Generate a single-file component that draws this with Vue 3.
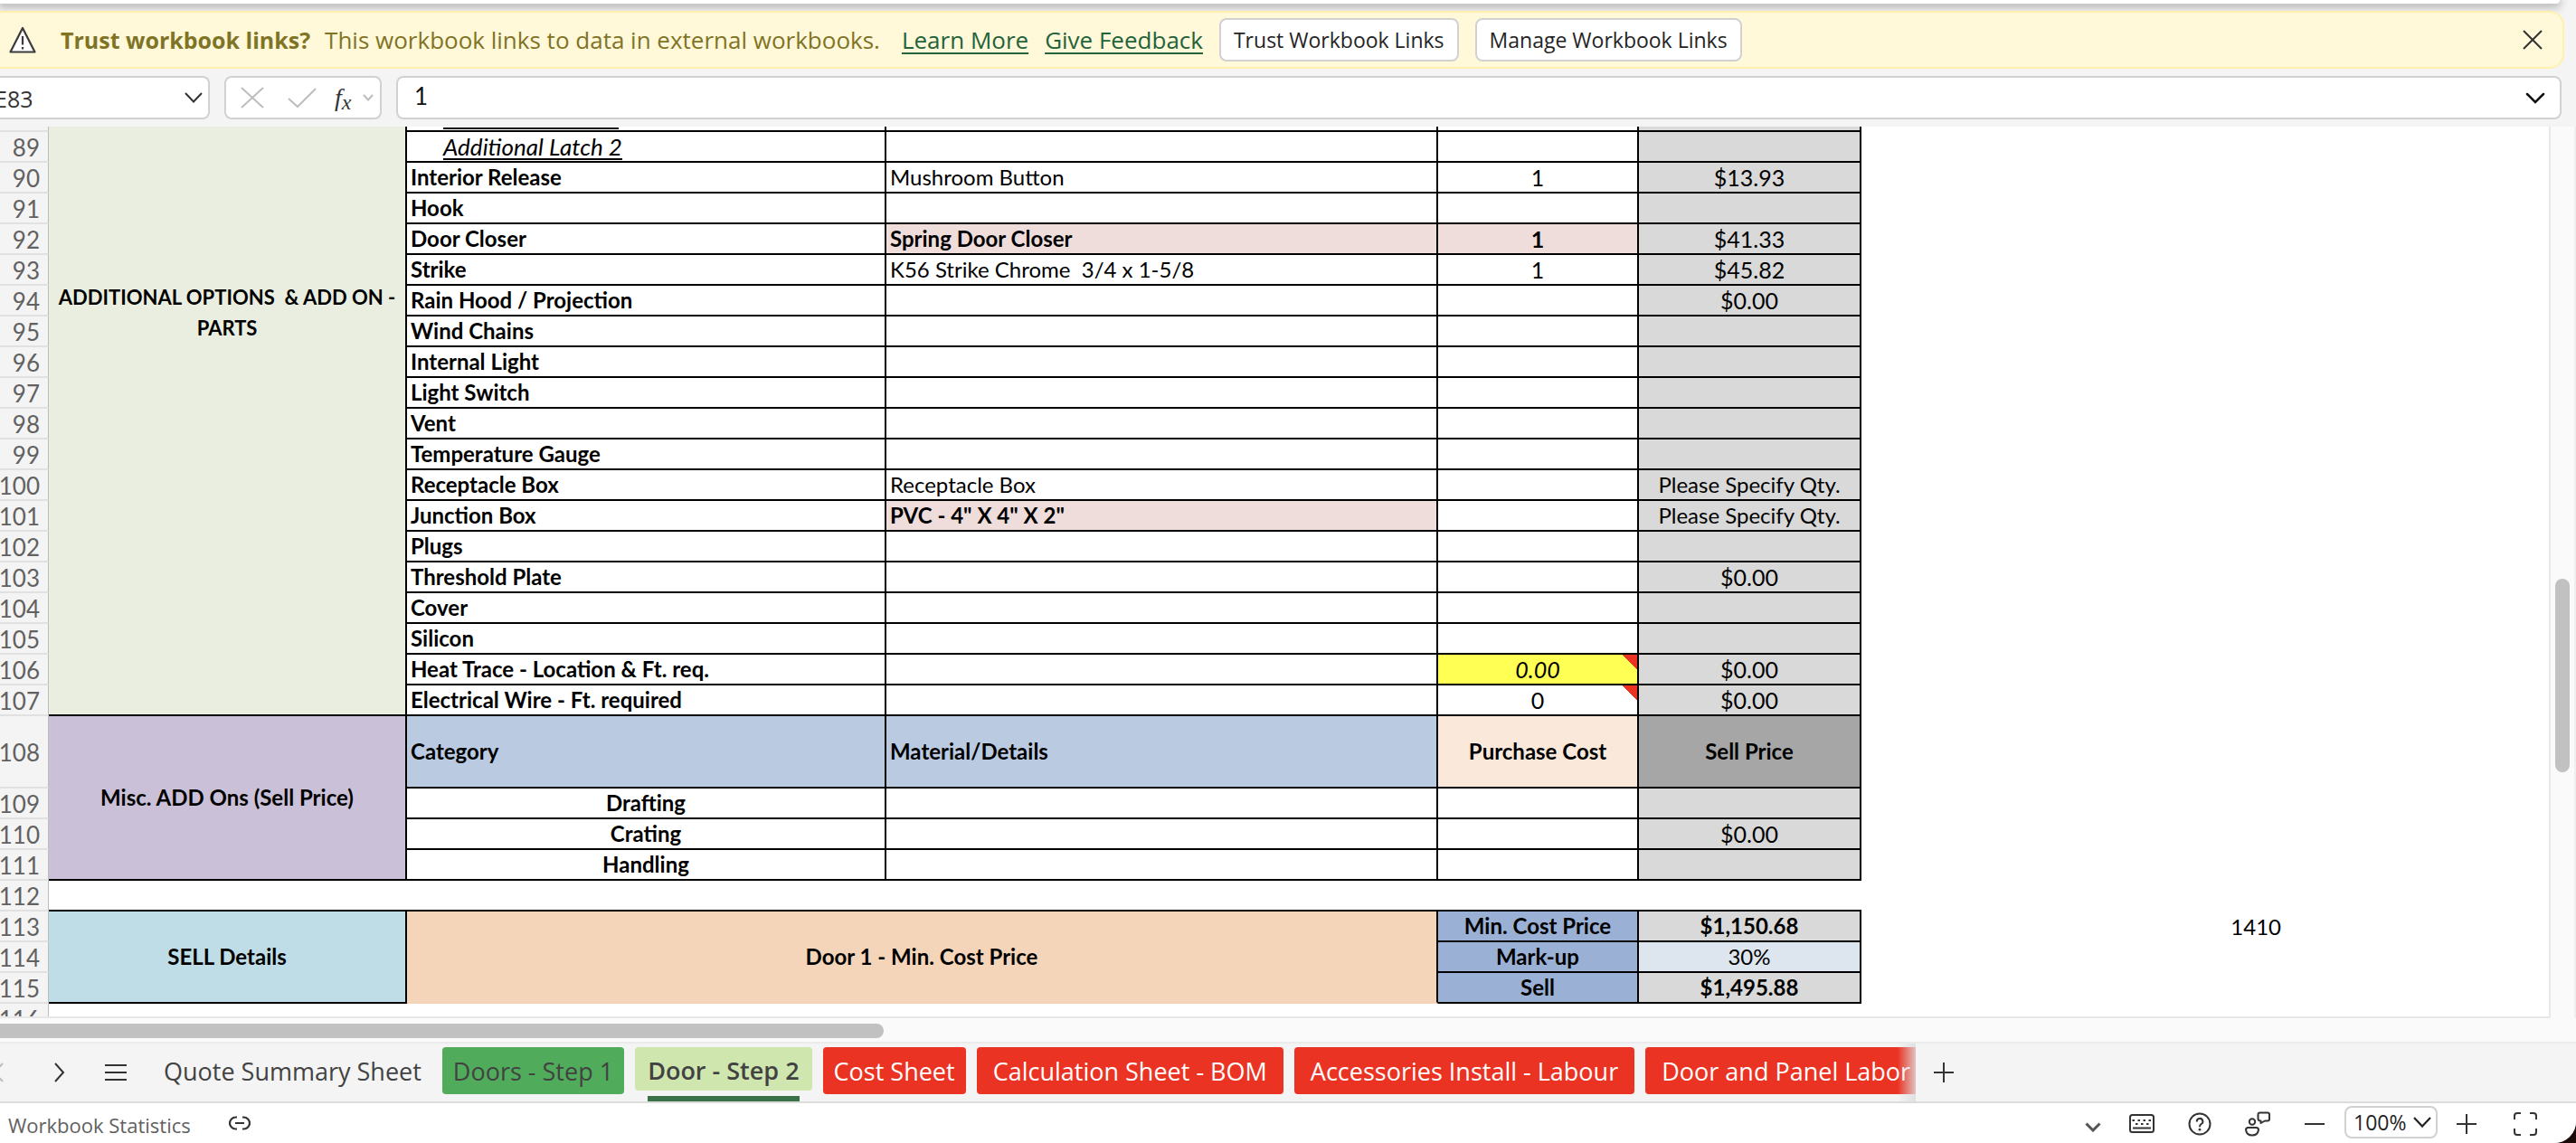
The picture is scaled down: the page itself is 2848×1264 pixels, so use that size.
<script setup>
const items = [
  { n: 89, label: 'Additional Latch 2', latch: true },
  { n: 90, label: 'Interior Release', detail: 'Mushroom Button', qty: '1', price: '$13.93' },
  { n: 91, label: 'Hook' },
  { n: 92, label: 'Door Closer', detail: 'Spring Door Closer', qty: '1', price: '$41.33', detailClass: 'pink bold', qtyClass: 'pink bold' },
  { n: 93, label: 'Strike', detail: 'K56 Strike Chrome  3/4 x 1-5/8', qty: '1', price: '$45.82' },
  { n: 94, label: 'Rain Hood / Projection', price: '$0.00' },
  { n: 95, label: 'Wind Chains' },
  { n: 96, label: 'Internal Light' },
  { n: 97, label: 'Light Switch' },
  { n: 98, label: 'Vent' },
  { n: 99, label: 'Temperature Gauge' },
  { n: 100, label: 'Receptacle Box', detail: 'Receptacle Box', price: 'Please Specify Qty.' },
  { n: 101, label: 'Junction Box', detail: 'PVC - 4" X 4" X 2"', price: 'Please Specify Qty.', detailClass: 'pink bold' },
  { n: 102, label: 'Plugs' },
  { n: 103, label: 'Threshold Plate', price: '$0.00' },
  { n: 104, label: 'Cover' },
  { n: 105, label: 'Silicon' },
  { n: 106, label: 'Heat Trace - Location & Ft. req.', qty: '0.00', price: '$0.00', qtyClass: 'yellow italic', note: true },
  { n: 107, label: 'Electrical Wire - Ft. required', qty: '0', price: '$0.00', note: true },
]

const misc = [
  { n: 109, label: 'Drafting' },
  { n: 110, label: 'Crating', price: '$0.00' },
  { n: 111, label: 'Handling' },
]

const tabs = [
  { name: 'Quote Summary Sheet', kind: 'plain' },
  { name: 'Doors - Step 1', kind: 'green' },
  { name: 'Door - Step 2', kind: 'active' },
  { name: 'Cost Sheet', kind: 'red' },
  { name: 'Calculation Sheet - BOM', kind: 'red wide' },
  { name: 'Accessories Install - Labour', kind: 'red wide' },
  { name: 'Door and Panel Labor BOM', kind: 'red wide' },
]
</script>

<template>
  <div class="app">
    <div class="ribbon-edge"></div>

    <section class="banner">
      <svg class="warn" viewBox="0 0 30 30" width="30" height="30">
        <path d="M15 2 L28.500 28.500 H1.500 Z" fill="#fff" stroke="#3b3b3b" stroke-width="2.200" stroke-linejoin="round" />
        <path d="M15 11 V20.500 M15 23 V25.500" stroke="#3b3b3b" stroke-width="2.200" />
      </svg>
      <strong class="banner-title">Trust workbook links?</strong>
      <span class="banner-text">This workbook links to data in external workbooks.</span>
      <a class="link learn" href="#">Learn More</a>
      <a class="link" href="#">Give Feedback</a>
      <button class="banner-btn" type="button">Trust Workbook Links</button>
      <button class="banner-btn" type="button">Manage Workbook Links</button>
      <button class="icon-btn dismiss" type="button" aria-label="Close">
        <svg viewBox="0 0 22 22" width="22" height="22"><path d="M1 1 L21 21 M21 1 L1 21" fill="none" stroke="#333" stroke-width="2" /></svg>
      </button>
    </section>

    <section class="formula-row">
      <div class="name-box">
        <input class="name-input" type="text" value="E83" aria-label="Name box" />
        <svg viewBox="0 0 20 12" width="20" height="12"><path d="M1 1 L10 10.500 L19 1" fill="none" stroke="#333" stroke-width="2" /></svg>
      </div>
      <div class="fx-box">
        <svg viewBox="0 0 26 24" width="26" height="24"><path d="M1 1 L25 23 M25 1 L1 23" fill="none" stroke="#bdbdbd" stroke-width="2" /></svg>
        <svg class="check" viewBox="0 0 32 24" width="32" height="24"><path d="M1 13 L11 22 L31 2" fill="none" stroke="#bdbdbd" stroke-width="2" /></svg>
        <span class="fx">f<sub>x</sub></span>
        <svg class="fx-chev" viewBox="0 0 12 8" width="12" height="8"><path d="M1 1 L6 6.500 L11 1" fill="none" stroke="#bdbdbd" stroke-width="2" /></svg>
      </div>
      <div class="formula-box">
        <input class="formula-input" type="text" value="1" aria-label="Formula bar" />
        <svg viewBox="0 0 22 13" width="22" height="13"><path d="M2 2 L11 11 L20 2" fill="none" stroke="#111" stroke-width="2.500" stroke-linecap="round" /></svg>
      </div>
    </section>

    <div class="grid-area">
      <div class="sheet">
        <table>
          <colgroup>
            <col class="c-num" /><col class="c-group" /><col class="c-label" /><col class="c-detail" />
            <col class="c-qty" /><col class="c-price" /><col class="c-extra" /><col />
          </colgroup>
          <tbody>
            <tr class="sliver">
              <th></th>
              <td class="group olive" rowspan="20">ADDITIONAL OPTIONS&nbsp; &amp; ADD ON -<br />PARTS</td>
              <td class="cell"><i></i></td>
              <td class="cell"></td>
              <td class="cell"></td>
              <td class="cell grey"></td>
            </tr>
            <tr v-for="r in items" :key="r.n">
              <th>{{ r.n }}</th>
              <td class="cell" :class="r.latch ? 'latch' : 'bold'"><span>{{ r.label }}</span></td>
              <td class="cell" :class="r.detailClass">{{ r.detail }}</td>
              <td class="cell center num" :class="[r.qtyClass, { note: r.note }]">{{ r.qty }}</td>
              <td class="cell center grey" :class="{ num: r.price?.startsWith('$') }">{{ r.price }}</td>
            </tr>
            <tr class="tall">
              <th>108</th>
              <td class="group purple" rowspan="4">Misc. ADD Ons (Sell Price)</td>
              <td class="cell bold blue">Category</td>
              <td class="cell bold blue">Material/Details</td>
              <td class="cell bold center peach">Purchase Cost</td>
              <td class="cell bold center darkgrey">Sell Price</td>
            </tr>
            <tr v-for="r in misc" :key="r.n">
              <th>{{ r.n }}</th>
              <td class="cell bold center">{{ r.label }}</td>
              <td class="cell"></td>
              <td class="cell"></td>
              <td class="cell center grey num">{{ r.price }}</td>
            </tr>
            <tr>
              <th>112</th>
              <td class="spacer" colspan="5"></td>
            </tr>
            <tr>
              <th>113</th>
              <td class="group teal" rowspan="3">SELL Details</td>
              <td class="group orange" colspan="2" rowspan="3">Door 1 - Min. Cost Price</td>
              <td class="cell bold center steel">Min. Cost Price</td>
              <td class="cell bold center grey">$1,150.68</td>
              <td class="extra">1410</td>
            </tr>
            <tr>
              <th>114</th>
              <td class="cell bold center steel">Mark-up</td>
              <td class="cell center pale">30%</td>
            </tr>
            <tr>
              <th>115</th>
              <td class="cell bold center steel">Sell</td>
              <td class="cell bold center grey">$1,495.88</td>
            </tr>
            <tr>
              <th>116</th>
            </tr>
          </tbody>
        </table>
      </div>
      <div class="vscroll"><div class="vthumb"></div></div>
    </div>
    <div class="hscroll"><div class="hthumb"></div></div>

    <nav class="tabbar">
      <div class="nav-icons">
        <svg viewBox="0 0 12 22" width="12" height="22"><path d="M11 1 L2 11 L11 21" fill="none" stroke="#bdbdbd" stroke-width="2" /></svg>
        <svg viewBox="0 0 12 22" width="12" height="22"><path d="M1 1 L10 11 L1 21" fill="none" stroke="#333" stroke-width="2" /></svg>
        <svg viewBox="0 0 24 20" width="24" height="20"><path d="M0 2 H24 M0 10 H24 M0 18 H24" stroke="#333" stroke-width="2" /></svg>
      </div>
      <div class="tabs">
        <button v-for="t in tabs" :key="t.name" type="button" class="tab" :class="t.kind"><span>{{ t.name }}</span></button>
      </div>
      <button class="icon-btn add" type="button" aria-label="New sheet">
        <svg viewBox="0 0 22 22" width="22" height="22"><path d="M11 0 V22 M0 11 H22" stroke="#333" stroke-width="2" /></svg>
      </button>
    </nav>

    <footer class="status">
      <span class="stats">Workbook Statistics</span>
      <svg class="chain" viewBox="0 0 24 16" width="24" height="16">
        <path d="M9 1.500 H7.500 A6.500 6.500 0 0 0 7.500 14.500 H9 M15 1.500 H16.500 A6.500 6.500 0 0 1 16.500 14.500 H15 M7 8 H17" fill="none" stroke="#333" stroke-width="2.200" />
      </svg>
      <div class="tools">
        <svg class="t-chev" viewBox="0 0 18 11" width="18" height="11"><path d="M1.500 1.500 L9 9 L16.500 1.500" fill="none" stroke="#555" stroke-width="3" /></svg>
        <svg class="t-key" viewBox="0 0 28 22" width="28" height="22">
          <rect x="1" y="1" width="26" height="19" rx="2.500" fill="none" stroke="#333" stroke-width="2" />
          <path d="M3.500 7 H6 M9.500 7 H12 M15.500 7 H18 M21.500 7 H24 M7 11 H9.500 M13 11 H15.500 M19 11 H21.500 M4 15.500 H24" stroke="#333" stroke-width="2" />
        </svg>
        <svg class="t-help" viewBox="0 0 26 26" width="26" height="26">
          <circle cx="13" cy="13" r="11.500" fill="none" stroke="#333" stroke-width="2" />
          <path d="M9.800 10.500 A3.300 3.300 0 1 1 14.500 13.200 Q13 14 13 16.200" fill="none" stroke="#333" stroke-width="2" />
          <circle cx="13" cy="19.200" r="1.400" fill="#333" />
        </svg>
        <svg class="t-feed" viewBox="0 0 28 28" width="28" height="28">
          <circle cx="8" cy="11.500" r="3.200" fill="none" stroke="#333" stroke-width="2" />
          <path d="M3.500 18 H12.500 Q15 18 15 20.500 Q14 26.500 8 26.500 Q2 26.500 1 20.500 Q1 18 3.500 18 Z" fill="none" stroke="#333" stroke-width="2" />
          <path d="M16.500 1.500 H25 Q27 1.500 27 3.500 V8.500 Q27 10.500 25 10.500 H22 L17.500 13 V10.500 Q14.500 10.500 14.500 8 V3.500 Q14.500 1.500 16.500 1.500 Z" fill="none" stroke="#333" stroke-width="2" stroke-linejoin="round" />
        </svg>
        <svg class="t-minus" viewBox="0 0 22 22" width="22" height="22"><path d="M0 11 H22" stroke="#333" stroke-width="2" /></svg>
        <button class="zoom" type="button">
          100%
          <svg viewBox="0 0 20 12" width="20" height="12"><path d="M1 1 L10 10.500 L19 1" fill="none" stroke="#222" stroke-width="2.200" /></svg>
        </button>
        <svg class="t-plus" viewBox="0 0 22 22" width="22" height="22"><path d="M11 0 V22 M0 11 H22" stroke="#333" stroke-width="2" /></svg>
        <svg class="t-full" viewBox="0 0 26 26" width="26" height="26"><path d="M1 8 V4 Q1 1 4 1 H8 M18 1 H22 Q25 1 25 4 V8 M25 18 V22 Q25 25 22 25 H18 M8 25 H4 Q1 25 1 22 V18" fill="none" stroke="#333" stroke-width="2" /></svg>
      </div>
    </footer>
  </div>
</template>

<style>
body {
  background: #1c0a08;
}
</style>

<style scoped>
.app {
  display: flex;
  flex-direction: column;
  height: 100vh;
  overflow: hidden;
  border-radius: 0 0 24px 0;
  background: #f4f4f4;
  font-family: "Open Sans", "Noto Sans", sans-serif;
  color: #333;
}
svg {
  display: block;
  flex: none;
}
button,
input {
  font: inherit;
  color: inherit;
}
input {
  border: 0;
  outline: 0;
  padding: 0;
  background: none;
  min-width: 0;
}
.icon-btn {
  border: 0;
  background: none;
  padding: 0;
}
.ribbon-edge {
  flex: none;
  height: 4px;
  margin-right: 18px;
  background: #fff;
  border-radius: 0 0 16px 0;
  box-shadow: 0 2px 10px 2px #0000004d;
}

.banner {
  position: relative;
  flex: none;
  display: flex;
  align-items: center;
  box-sizing: border-box;
  height: 64px;
  margin: 8px 13px 0 0;
  padding: 0 22px 0 10px;
  border: 2px solid #fef1ae;
  border-left: 0;
  border-radius: 0 16px 16px 0;
  background: #fff8d9;
  font-size: 26px;
  color: #7f7326;
  white-space: nowrap;
}
.banner-title {
  margin-left: 27px;
  font-size: 25px;
}
.banner-text {
  margin-left: 16px;
}
.link {
  margin-left: 18px;
  color: #23623a;
  text-decoration: underline;
  text-decoration-thickness: 2px;
  text-underline-offset: 4px;
}
.learn {
  margin-left: 24px;
}
.banner-btn {
  box-sizing: border-box;
  height: 48px;
  margin-left: 18px;
  padding: 0 14px;
  border: 2px solid #d1d1d1;
  border-radius: 8px;
  background: #fff;
  font-size: 23px;
  color: #242424;
}
.dismiss {
  margin-left: auto;
}

.formula-row {
  flex: none;
  display: flex;
  gap: 16px;
  height: 48px;
  margin: 8px 16px 8px 0;
}
.name-box,
.fx-box,
.formula-box {
  box-sizing: border-box;
  display: flex;
  align-items: center;
  border: 2px solid #d1d1d1;
  border-radius: 8px;
  background: #fff;
}
.name-box {
  width: 232px;
  padding-right: 6px;
  border-left: 0;
  border-radius: 0 8px 8px 0;
  font-size: 25px;
}
.name-input {
  flex: 1;
  margin-left: -6px;
  padding-top: 2px;
}
.fx-box {
  width: 174px;
  padding-left: 16px;
}
.check {
  margin-left: 26px;
}
.fx {
  margin-left: 20px;
  font: italic 28px/28px "Liberation Serif", serif;
}
.fx sub {
  font-size: 24px;
  line-height: 20px;
  vertical-align: -4px;
}
.fx-chev {
  margin-left: auto;
  margin-right: 7px;
}
.formula-box {
  flex: 1;
  padding: 0 16px 0 18px;
}
.formula-input {
  flex: 1;
  padding-bottom: 4px;
  font: 26px/36px Lato, sans-serif;
  color: #111;
}

.grid-area {
  flex: 1;
  min-height: 0;
  display: flex;
}
.sheet {
  flex: 1;
  min-width: 0;
  overflow: hidden;
  background: #fff;
  border-right: 2px solid #e8e8e8;
  border-bottom: 2px solid #e8e8e8;
}
table {
  width: 100%;
  table-layout: fixed;
  border-collapse: separate;
  border-spacing: 0;
  font: 24px/28px Lato, sans-serif;
  color: #000;
}
.c-num { width: 54px; }
.c-group { width: 396px; }
.c-label { width: 530px; }
.c-detail { width: 610px; }
.c-qty { width: 222px; }
.c-price { width: 246px; }
.c-extra { width: 464px; }
tr {
  height: 34px;
}
tr.sliver {
  height: 6px;
}
tr.tall {
  height: 80px;
}
th,
td {
  box-sizing: border-box;
  padding: 0;
  white-space: nowrap;
}
th {
  padding: 2px 10px 0 0;
  border-right: 1px solid #bcbcbc;
  border-bottom: 2px solid #e1e1e1;
  background: #f4f4f4;
  font-size: 26px;
  font-weight: 400;
  text-align: right;
  color: #616161;
  direction: rtl;
}
.cell {
  padding-left: 4px;
  border-right: 2px solid #000;
  border-bottom: 2px solid #000;
  white-space: pre;
}
.center {
  padding-left: 0;
  text-align: center;
}
.num {
  font-size: 25px;
}
.bold {
  font-weight: 700;
}
.italic {
  font-style: italic;
}
.latch {
  padding: 2px 0 0 40px;
  font-style: italic;
}
.latch span {
  display: inline-block;
  border-bottom: 2px solid #000;
  font-size: 26px;
  line-height: 26px;
  vertical-align: top;
}
.sliver .cell,
.sliver th {
  padding-top: 0;
  line-height: 0;
}
.sliver i {
  display: block;
  width: 194px;
  height: 2px;
  margin: 0 0 1px 36px;
  background: #000;
}
.group {
  border-right: 2px solid #000;
  border-bottom: 2px solid #000;
  font-weight: 700;
  text-align: center;
}
.olive {
  padding-bottom: 238px;
  background: #eaeee0;
  font-size: 22px;
  line-height: 34px;
}
.purple { background: #cac0d8; }
.teal { background: #bfdde6; }
.orange {
  background: #f4d5b9;
  border-bottom-color: #f4d5b9;
}
.grey { background: #d9d9d9; }
.darkgrey { background: #a6a6a6; }
.blue { background: #bacae1; }
.steel { background: #9ab1d5; }
.pale { background: #dde5ef; }
.peach { background: #fae8db; }
.pink { background: #efdddc; }
.yellow { background: #ffff54; }
.note {
  background-image: linear-gradient(to top right, transparent 50%, #eb3323 50%);
  background-repeat: no-repeat;
  background-position: top right;
  background-size: 17px 17px;
}
.spacer {
  border-bottom: 2px solid #000;
}
.extra {
  text-align: right;
}

.vscroll {
  flex: none;
  width: 26px;
  border-right: 2px solid #efefef;
  background: #fafafa;
}
.vthumb {
  width: 16px;
  height: 214px;
  margin: 500px 0 0 5px;
  border-radius: 8px;
  background: #c1c1c1;
}
.hscroll {
  flex: none;
  height: 26px;
  border-bottom: 2px solid #ebebeb;
  background: #fafafa;
}
.hthumb {
  width: 977px;
  height: 16px;
  margin-top: 6px;
  border-radius: 0 8px 8px 0;
  background: #c1c1c1;
}

.tabbar {
  flex: none;
  display: flex;
  height: 64px;
  border-bottom: 2px solid #dcdcdc;
  font-size: 27px;
}
.nav-icons {
  flex: none;
  display: flex;
  align-items: center;
  width: 169px;
  margin-left: -8px;
}
.nav-icons svg:nth-child(2) {
  margin-left: 56px;
}
.nav-icons svg:nth-child(3) {
  margin-left: 44px;
}
.tabs {
  position: relative;
  display: flex;
  gap: 12px;
  width: 1957px;
  overflow: hidden;
}
.tabs::after {
  content: "";
  position: absolute;
  top: 0;
  right: 0;
  width: 20px;
  height: 100%;
  background: linear-gradient(to right, transparent, #dcdcdcd9);
}
.tab {
  position: relative;
  flex: none;
  height: 52px;
  margin-top: 4px;
  padding: 0 12px;
  border: 0;
  border-radius: 4px;
  background: none;
  color: #424242;
  white-space: nowrap;
}
.tab.wide { padding: 0 18px; }
.tab.plain { padding: 0 11px 0 20px; }
.tab.green { background: #50ac5b; }
.tab.red {
  background: #eb3323;
  color: #fff;
}
.tab.active {
  height: 60px;
  padding: 0 14px;
  font-weight: 600;
}
.tab.active span {
  display: block;
  height: 48px;
  margin: 0 -14px 6px;
  padding: 0 14px;
  border-radius: 4px;
  background: #cfe6af;
  line-height: 52px;
}
.tab.active::after {
  content: "";
  display: block;
  height: 6px;
  background: #3a7149;
}
.add {
  margin-left: 20px;
}

.status {
  flex: none;
  display: flex;
  align-items: center;
  height: 44px;
  background: #fff;
  font-size: 22px;
  color: #616161;
}
.stats {
  margin-left: 9px;
  padding-top: 4px;
}
.chain {
  margin-left: 42px;
}
.tools {
  display: flex;
  align-items: center;
  margin-left: auto;
  padding-top: 2px;
  padding-right: 43px;
}
.t-chev { margin-top: 6px; }
.t-key { margin-left: 31px; }
.t-help { margin-left: 37px; }
.t-feed { margin-left: 37px; }
.t-minus { margin-left: 38px; }
.t-plus { margin-left: 21px; }
.t-full { margin-left: 41px; }
.zoom {
  box-sizing: border-box;
  display: flex;
  align-items: center;
  justify-content: space-between;
  width: 103px;
  height: 36px;
  margin: 0 0 4px 22px;
  padding: 0 5px 0 8px;
  border: 2px solid #d1d1d1;
  border-radius: 8px;
  background: #fff;
  font-size: 23px;
  color: #242424;
}
</style>
